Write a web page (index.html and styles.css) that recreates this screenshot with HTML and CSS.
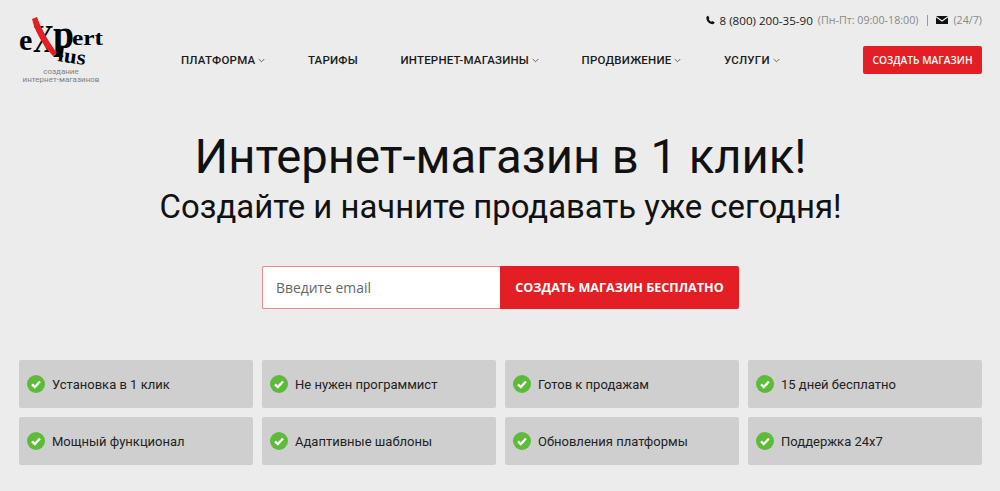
FILE: index.html
```html
<!DOCTYPE html>
<html lang="ru">
<head>
<meta charset="utf-8">
<title>Интернет-магазин в 1 клик</title>
<link rel="stylesheet" href="styles.css">
</head>
<body>
<div class="page">
  <header class="header">
    <a class="logo">
      <svg class="logo-mark" width="86" height="52" viewBox="0 0 86 52">
        <text class="lg" x="0" y="33" font-size="30">e</text>
        <text class="lg" x="34" y="31" font-size="42" textLength="21" lengthAdjust="spacingAndGlyphs">p</text>
        <text class="lg" x="53" y="28" font-size="22" textLength="31" lengthAdjust="spacingAndGlyphs">ert</text>
        <text class="lg" x="38" y="44" font-size="21" textLength="28" lengthAdjust="spacingAndGlyphs" transform="rotate(8 38 44)">lus</text>
        <text class="lg" x="14" y="35" font-size="40" textLength="21" lengthAdjust="spacingAndGlyphs">X</text>
        <path d="M13 2 L18 0 C22 12 30 25 38 36 L34 39 C25 30 16 15 13 2 Z" fill="#e31e24"/>
      </svg>
      <span class="logo-text">создание<br>интернет-магазинов</span>
    </a>
    <div class="header-main">
      <div class="contacts">
        <svg class="ico-phone" width="9" height="10" viewBox="0 0 10 10"><path d="M2.400.4 3.900 3 2.900 4c.5 1.300 1.700 2.500 3 3l1-1 2.700 1.500c-.3 1.300-1.200 2.100-2.400 2.100C3.600 9.600.4 6.400.4 2.800.4 1.600 1.200.7 2.400.4Z" fill="#111"/></svg>
        <span class="phone">8 (800) 200-35-90</span>
        <span class="muted">(Пн-Пт: 09:00-18:00)</span>
        <span class="sep"></span>
        <svg class="ico-mail" width="12" height="8" viewBox="0 0 12 8"><path d="M0 0h12L6 4.200Z" fill="#111"/><path d="M0 1.500V8h12V1.500L6 5.700Z" fill="#111"/></svg>
        <span class="muted">(24/7)</span>
      </div>
      <div class="nav-row">
        <nav class="nav">
          <a class="nav-link">ПЛАТФОРМА<svg class="chev" width="7" height="5" viewBox="0 0 7 5"><path d="M.7 1 3.500 3.800 6.300 1" fill="none" stroke="#666" stroke-width="1"/></svg></a>
          <a class="nav-link">ТАРИФЫ</a>
          <a class="nav-link">ИНТЕРНЕТ-МАГАЗИНЫ<svg class="chev" width="7" height="5" viewBox="0 0 7 5"><path d="M.7 1 3.500 3.800 6.300 1" fill="none" stroke="#666" stroke-width="1"/></svg></a>
          <a class="nav-link">ПРОДВИЖЕНИЕ<svg class="chev" width="7" height="5" viewBox="0 0 7 5"><path d="M.7 1 3.500 3.800 6.300 1" fill="none" stroke="#666" stroke-width="1"/></svg></a>
          <a class="nav-link">УСЛУГИ<svg class="chev" width="7" height="5" viewBox="0 0 7 5"><path d="M.7 1 3.500 3.800 6.300 1" fill="none" stroke="#666" stroke-width="1"/></svg></a>
        </nav>
        <a class="btn-small">СОЗДАТЬ МАГАЗИН</a>
      </div>
    </div>
  </header>

  <section class="hero">
    <h1 class="title">Интернет-магазин в 1 клик!</h1>
    <h2 class="subtitle">Создайте и начните продавать уже сегодня!</h2>
    <form class="signup">
      <div class="email">Введите email</div>
      <div class="btn-big">СОЗДАТЬ МАГАЗИН БЕСПЛАТНО</div>
    </form>
  </section>

  <section class="features">
    <div class="card"><svg class="check" width="18" height="18" viewBox="0 0 18 18"><circle cx="9" cy="9" r="9" fill="#5dbb3a"/><path d="M5 9.300 7.800 12 13 6.500" fill="none" stroke="#fff" stroke-width="2.400"/></svg>Установка в 1 клик</div>
    <div class="card"><svg class="check" width="18" height="18" viewBox="0 0 18 18"><circle cx="9" cy="9" r="9" fill="#5dbb3a"/><path d="M5 9.300 7.800 12 13 6.500" fill="none" stroke="#fff" stroke-width="2.400"/></svg>Не нужен программист</div>
    <div class="card"><svg class="check" width="18" height="18" viewBox="0 0 18 18"><circle cx="9" cy="9" r="9" fill="#5dbb3a"/><path d="M5 9.300 7.800 12 13 6.500" fill="none" stroke="#fff" stroke-width="2.400"/></svg>Готов к продажам</div>
    <div class="card"><svg class="check" width="18" height="18" viewBox="0 0 18 18"><circle cx="9" cy="9" r="9" fill="#5dbb3a"/><path d="M5 9.300 7.800 12 13 6.500" fill="none" stroke="#fff" stroke-width="2.400"/></svg>15 дней бесплатно</div>
    <div class="card"><svg class="check" width="18" height="18" viewBox="0 0 18 18"><circle cx="9" cy="9" r="9" fill="#5dbb3a"/><path d="M5 9.300 7.800 12 13 6.500" fill="none" stroke="#fff" stroke-width="2.400"/></svg>Мощный функционал</div>
    <div class="card"><svg class="check" width="18" height="18" viewBox="0 0 18 18"><circle cx="9" cy="9" r="9" fill="#5dbb3a"/><path d="M5 9.300 7.800 12 13 6.500" fill="none" stroke="#fff" stroke-width="2.400"/></svg>Адаптивные шаблоны</div>
    <div class="card"><svg class="check" width="18" height="18" viewBox="0 0 18 18"><circle cx="9" cy="9" r="9" fill="#5dbb3a"/><path d="M5 9.300 7.800 12 13 6.500" fill="none" stroke="#fff" stroke-width="2.400"/></svg>Обновления платформы</div>
    <div class="card"><svg class="check" width="18" height="18" viewBox="0 0 18 18"><circle cx="9" cy="9" r="9" fill="#5dbb3a"/><path d="M5 9.300 7.800 12 13 6.500" fill="none" stroke="#fff" stroke-width="2.400"/></svg>Поддержка 24х7</div>
  </section>
</div>
</body>
</html>
```
FILE: styles.css
```css
* { box-sizing: border-box; }
html, body { margin: 0; height: 100%; }
body { background: #ececec; font-family: Roboto, "Noto Sans", sans-serif; color: #111; overflow: hidden; }
.page { padding: 0 18px 0 19px; }

.header { display: flex; height: 90px; }
.logo { width: 120px; flex: none; padding-top: 17px; display: block; }
.logo-mark { display: block; overflow: visible; }
.lg { font-family: "Liberation Serif", serif; font-weight: 700; fill: #000; }
.logo-text { display: block; width: 84px; margin-top: -1px; font-size: 8px; line-height: 8px; text-align: center; color: #808080; }

.header-main { flex: 1; display: flex; flex-direction: column; }
.contacts { display: flex; align-items: center; justify-content: flex-end; height: 16px; margin-top: 12px; font-family: "Open Sans", sans-serif; font-size: 11.600px; }
.ico-phone { margin-right: 5px; }
.phone { color: #1a1a1a; font-weight: 500; }
.muted { color: #888; font-size: 10.700px; margin-left: 5px; }
.sep { width: 1px; height: 11px; background: #999; margin: 0 8px 0 9px; }
.ico-mail { margin-right: 0; }

.nav-row { display: flex; align-items: center; justify-content: space-between; margin-top: 18px; }
.nav { display: flex; padding-left: 42px; gap: 42.600px; }
.nav-link { display: flex; align-items: center; font-size: 11.500px; font-weight: 500; color: #1a1a1a; letter-spacing: .2px; white-space: nowrap; }
.chev { margin-left: 3px; margin-top: 1px; }
.btn-small { display: block; width: 119px; height: 28px; line-height: 28px; background: #e31e24; border-radius: 2px; color: #fff; font-family: "Open Sans", sans-serif; font-size: 10.200px; font-weight: 600; text-align: center; }

.hero { text-align: center; }
.title { margin: 39px 0 0; font-size: 47.200px; font-weight: 400; line-height: 56px; color: #111; }
.subtitle { margin: 3px 0 0; font-size: 32.900px; font-weight: 400; line-height: 38px; color: #111; }
.signup { display: flex; width: 477px; height: 43px; margin: 40px auto 0; text-align: left; }
.email { width: 238px; border: 1px solid #e58a8d; border-right: 0; border-radius: 2px 0 0 2px; background: #fff; padding-left: 13px; line-height: 41px; font-family: "Open Sans", sans-serif; font-size: 13.900px; color: #666; }
.btn-big { flex: 1; background: #e31e24; border-radius: 0 2px 2px 0; color: #fff; font-family: "Open Sans", sans-serif; font-size: 12.600px; font-weight: 700; line-height: 43px; text-align: center; }

.features { display: grid; grid-template-columns: repeat(4, 234px); column-gap: 9px; row-gap: 9px; margin-top: 51px; }
.card { display: flex; align-items: center; height: 48px; background: #cfcfcf; border-radius: 2px; padding-left: 8px; font-size: 13px; color: #222; }
.check { margin-right: 7px; flex: none; margin-top: -1px; }
```
